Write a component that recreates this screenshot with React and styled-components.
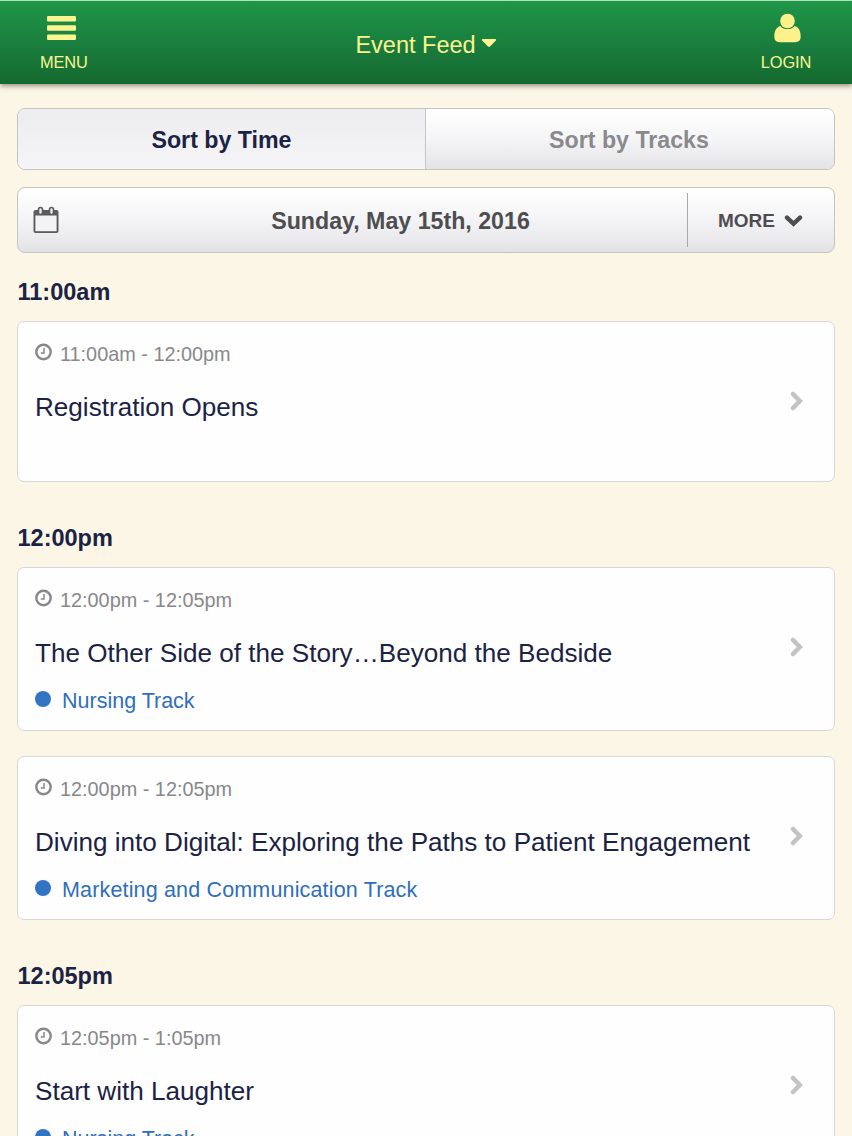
import React from "react";
import styled, { createGlobalStyle } from "styled-components";

const GlobalStyle = createGlobalStyle`
  * { box-sizing: border-box; }
  html, body { margin: 0; padding: 0; height: 100%; overflow: hidden; }
  body {
    background: #fbf6e6;
    color: #1b2344;
    font-family: "Liberation Sans", Arial, sans-serif;
    -webkit-font-smoothing: antialiased;
  }
  svg { display: block; flex: none; }
`;

const Page = styled.div`
  height: 100vh;
  overflow: hidden;
`;

const Header = styled.header`
  display: flex;
  justify-content: space-between;
  height: 84px;
  border-top: 1px solid #b4e0be;
  background: linear-gradient(#1f9648, #1a7f3e 50%, #14692f);
  box-shadow: 0 2px 5px rgba(70, 60, 40, 0.55);
  color: #fbf491;
`;

const NavButton = styled.a`
  display: flex;
  flex-direction: column;
  align-items: ${(p) => (p.$end ? "center" : "flex-start")};
  width: 130px;
  padding: 12px ${(p) => (p.$end ? "2px 0 0" : "0 0 40px")};
  font-size: 16.4px;
  line-height: 20px;
  letter-spacing: -0.15px;
`;

const NavIcon = styled.span`
  height: 39px;
  padding-left: ${(p) => p.$indent || 0}px;
`;

const PageTitle = styled.h1`
  display: flex;
  align-items: flex-start;
  gap: 5px;
  height: 28px;
  margin: 30px 0 0;
  font-size: 23.5px;
  font-weight: 400;
  line-height: 29px;
`;

const TitleCaret = styled.span`
  padding-top: 7px;
`;

const Content = styled.main`
  padding: 24px 17px 0;
`;

const Segmented = styled.div`
  display: flex;
  height: 62px;
  border: 1px solid #c6c4c1;
  border-radius: 8px;
  overflow: hidden;
`;

const Segment = styled.button`
  flex: ${(p) => (p.$active ? "0 0 407px" : "1")};
  border: 0;
  padding: ${(p) => (p.$active ? "2px 0 0" : "2px 2px 0 0")};
  border-left: ${(p) => (p.$active ? "0" : "1px solid #c6c4c6")};
  background: ${(p) =>
    p.$active
      ? "linear-gradient(#ededf0, #f5f5f7)"
      : "linear-gradient(#ffffff, #f5f5f7 50%, #e4e3e6)"};
  color: ${(p) => (p.$active ? "#1b2344" : "#8a898c")};
  font: bold 23.2px "Liberation Sans", Arial, sans-serif;
`;

const DateBar = styled.div`
  display: flex;
  align-items: center;
  height: 66px;
  margin-top: 17px;
  border: 1px solid #c6c4c1;
  border-radius: 8px;
  background: linear-gradient(#ffffff, #f4f4f6 50%, #e3e2e5);
  color: #4e4e50;
  font-weight: bold;
`;

const CalendarIcon = styled.span`
  width: 42px;
  padding-left: 14px;
`;

const DateLabel = styled.span`
  flex: 1;
  padding: 1px 1px 0 55px;
  text-align: center;
  font-size: 23.2px;
  line-height: 28px;
`;

const MoreButton = styled.span`
  display: flex;
  align-items: center;
  gap: 9px;
  width: 147px;
  height: 54px;
  padding: 1px 0 0 30px;
  border-left: 1px solid #a9a9ab;
  font-size: 19px;
`;

const Section = styled.section`
  margin-top: ${(p) => (p.$first ? 25 : 42)}px;
`;

const TimeHeading = styled.h2`
  margin: 0 0 15px;
  padding-left: 0.5px;
  font-size: 23.5px;
  line-height: 28px;
`;

const CardList = styled.div`
  display: flex;
  flex-direction: column;
  gap: 25px;
`;

const Card = styled.article`
  display: flex;
  min-height: 161px;
  padding: 20px 30px 16px 17px;
  border: 1px solid #d9d7d6;
  border-radius: 7px;
  background: #fefefe;
`;

const CardBody = styled.div`
  flex: 1;
`;

const TimeRange = styled.div`
  display: flex;
  gap: 8px;
  color: #88888b;
  font-size: 19.85px;
  line-height: 24px;
`;

const ClockIcon = styled.span`
  padding-top: 1px;
`;

const EventTitle = styled.h3`
  margin: 21px 0 0;
  font-size: 26.1px;
  font-weight: 400;
  line-height: 40px;
  white-space: nowrap;
`;

const Track = styled.div`
  display: flex;
  gap: 11px;
  margin-top: 15px;
  color: #2f6fba;
  font-size: 21.5px;
  line-height: 26px;
  letter-spacing: ${(p) => (p.$loose ? "0.16px" : "0")};
`;

const Dot = styled.span`
  width: 16px;
  height: 16px;
  margin-top: 3px;
  border-radius: 50%;
  background: #3174c3;
`;

const CardArrow = styled.span`
  padding-top: 48px;
`;

const sections = [
  { time: "11:00am", events: [{ range: "11:00am - 12:00pm", title: "Registration Opens" }] },
  {
    time: "12:00pm",
    events: [
      {
        range: "12:00pm - 12:05pm",
        title: "The Other Side of the Story…Beyond the Bedside",
        track: "Nursing Track",
      },
      {
        range: "12:00pm - 12:05pm",
        title: "Diving into Digital: Exploring the Paths to Patient Engagement",
        track: "Marketing and Communication Track",
      },
    ],
  },
  {
    time: "12:05pm",
    events: [{ range: "12:05pm - 1:05pm", title: "Start with Laughter", track: "Nursing Track" }],
  },
];

function EventCard({ range, title, track }) {
  return (
    <Card>
      <CardBody>
        <TimeRange>
          <ClockIcon>
            <svg width="17" height="18" viewBox="0 0 17 18" fill="none" stroke="#88888b">
              <circle cx="8.5" cy="9" r="7.2" strokeWidth="2.4" />
              <path d="M9 5v5H5.8" strokeWidth="1.5" />
            </svg>
          </ClockIcon>
          {range}
        </TimeRange>
        <EventTitle>{title}</EventTitle>
        {track && (
          <Track $loose={track.length > 20}>
            <Dot />
            {track}
          </Track>
        )}
      </CardBody>
      <CardArrow>
        <svg width="15" height="22" viewBox="0 0 15 22" fill="none">
          <path d="M4 4 10.800 11 4 18" stroke="#c3c3c5" strokeWidth="4.600" strokeLinecap="round" />
        </svg>
      </CardArrow>
    </Card>
  );
}

export default function App() {
  return (
    <Page>
      <GlobalStyle />
      <Header>
        <NavButton>
          <NavIcon $indent={7}>
            <svg width="29" height="30" viewBox="0 0 29 30" fill="#fbf491">
              <rect y="3" width="29" height="5.400" rx="1.200" />
              <rect y="12.300" width="29" height="5.400" rx="1.200" />
              <rect y="21.600" width="29" height="5.400" rx="1.200" />
            </svg>
          </NavIcon>
          MENU
        </NavButton>
        <PageTitle>
          Event Feed
          <TitleCaret>
            <svg width="16" height="12" viewBox="0 0 16 12">
              <path d="M1.600 1h12.800q1.200.3.500 1.400L9 8.400q-1 .8-2 0L1.100 2.400q-.7-1.100.5-1.400z" fill="#fbf491" />
            </svg>
          </TitleCaret>
        </PageTitle>
        <NavButton $end>
          <NavIcon $indent={3}>
            <svg width="27" height="30" viewBox="0 0 27 30" fill="#fcf18a">
              <path d="M6.300 12.900C2 14 .3 18.500.3 23.500c0 3.700 2 5.700 5.200 5.700h16c3.200 0 5.200-2 5.200-5.700 0-5-1.700-9.500-6-10.600-1.900 2.100-4.300 3.200-7.200 3.200s-5.300-1.100-7.200-3.200z" />
              <circle cx="13.500" cy="8" r="7.300" />
            </svg>
          </NavIcon>
          LOGIN
        </NavButton>
      </Header>
      <Content>
        <Segmented>
          <Segment $active>Sort by Time</Segment>
          <Segment>Sort by Tracks</Segment>
        </Segmented>
        <DateBar>
          <CalendarIcon>
            <svg width="28" height="28" viewBox="0 0 28 28">
              <path d="M3.500 4h21q2 0 2 2v19q0 2-2 2h-21q-2 0-2-2V6q0-2 2-2z" fill="#5b5b5d" />
              <path d="M3.400 9.500h21.200v15.700H3.400z" fill="#f3f3f5" />
              <rect x="6.500" y="1.500" width="4" height="7" rx="2" fill="#ededef" stroke="#5b5b5d" strokeWidth="1.600" />
              <rect x="17.500" y="1.500" width="4" height="7" rx="2" fill="#ededef" stroke="#5b5b5d" strokeWidth="1.600" />
            </svg>
          </CalendarIcon>
          <DateLabel>Sunday, May 15th, 2016</DateLabel>
          <MoreButton>
            MORE
            <svg width="19" height="14" viewBox="0 0 19 14" fill="none">
              <path d="M3 3.600 9.500 9.800l6.500-6.200" stroke="#4e4e50" strokeWidth="4.400" strokeLinecap="round" />
            </svg>
          </MoreButton>
        </DateBar>
        {sections.map((s, i) => (
          <Section key={s.time} $first={i === 0}>
            <TimeHeading>{s.time}</TimeHeading>
            <CardList>
              {s.events.map((e) => (
                <EventCard key={e.title} {...e} />
              ))}
            </CardList>
          </Section>
        ))}
      </Content>
    </Page>
  );
}
